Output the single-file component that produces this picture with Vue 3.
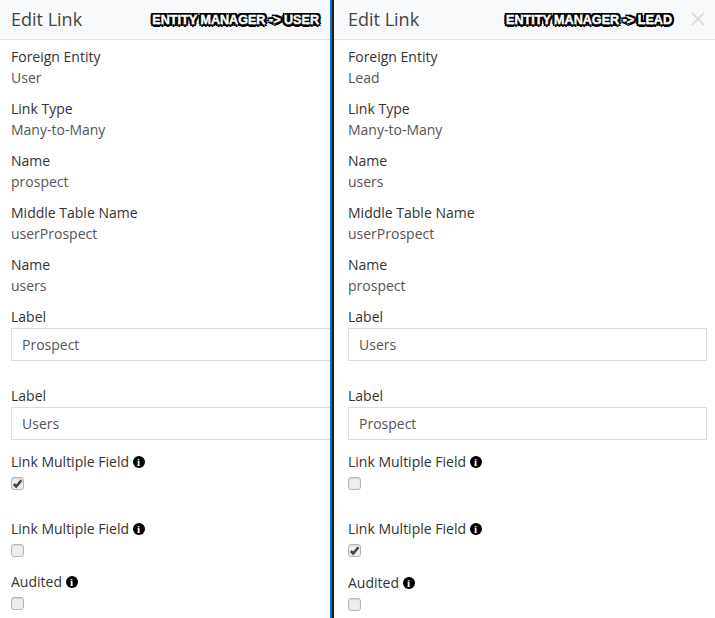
<script setup>
const panes = [
  {
    stamp: 'ENTITY MANAGER -> USER',
    close: false,
    info: [['Foreign Entity', 'User'], ['Link Type', 'Many-to-Many'], ['Name', 'prospect'], ['Middle Table Name', 'userProspect'], ['Name', 'users']],
    labels: ['Prospect', 'Users'],
    checks: [true, false],
    audited: 'audited-a'
  },
  {
    stamp: 'ENTITY MANAGER -> LEAD',
    close: true,
    info: [['Foreign Entity', 'Lead'], ['Link Type', 'Many-to-Many'], ['Name', 'users'], ['Middle Table Name', 'userProspect'], ['Name', 'prospect']],
    labels: ['Users', 'Prospect'],
    checks: [false, true],
    audited: 'audited-b'
  }
]
</script>

<template>
  <div class="page">
    <section v-for="(p, i) in panes" :key="i" class="pane" :class="'pane-' + i">
      <header class="head">
        <h2 class="title">Edit Link</h2>
        <span class="stamp">{{ p.stamp }}</span>
        <svg v-if="p.close" class="close" width="14" height="14" viewBox="0 0 14 14">
          <path d="M1 1 13 13M13 1 1 13" stroke="#dcdcdc" stroke-width="1.8" fill="none" />
        </svg>
      </header>
      <div class="body">
        <div v-for="(r, j) in p.info" :key="j" class="field">
          <div class="lbl">{{ r[0] }}</div>
          <div class="val">{{ r[1] }}</div>
        </div>
        <div class="field input-field first-input">
          <div class="lbl">Label</div>
          <div class="input">{{ p.labels[0] }}</div>
        </div>
        <div class="field input-field second-input">
          <div class="lbl">Label</div>
          <div class="input">{{ p.labels[1] }}</div>
        </div>
        <div class="field check-field lm1">
          <div class="lbl">Link Multiple Field <span class="info">i</span></div>
          <div class="box">
            <svg v-if="p.checks[0]" width="11" height="11" viewBox="0 0 11 11"><path d="M1.8 6 4.2 8.6 9.4 2.2" stroke="#444" stroke-width="2.6" fill="none" /></svg>
          </div>
        </div>
        <div class="field check-field lm2">
          <div class="lbl">Link Multiple Field <span class="info">i</span></div>
          <div class="box">
            <svg v-if="p.checks[1]" width="11" height="11" viewBox="0 0 11 11"><path d="M1.8 6 4.2 8.6 9.4 2.2" stroke="#444" stroke-width="2.6" fill="none" /></svg>
          </div>
        </div>
        <div class="field check-field aud" :class="p.audited">
          <div class="lbl">Audited <span class="info">i</span></div>
          <div class="box"></div>
        </div>
      </div>
    </section>
  </div>
</template>

<style>
html, body { margin: 0; background: #fff; }
</style>

<style scoped>
.page {
  width: 715px;
  height: 618px;
  display: flex;
  overflow: hidden;
  font-family: "Open Sans", sans-serif;
  font-size: 14px;
  line-height: 20px;
  color: #333;
  background: #fff;
}
.pane { height: 618px; overflow: hidden; flex: none; box-sizing: border-box; }
.pane-0 { width: 330px; }
.pane-1 {
  width: 385px;
  border-left: 2px solid #0a6fc2;
  position: relative;
}
.pane-1::before {
  content: "";
  position: absolute;
  top: 0;
  bottom: 0;
  left: 0;
  width: 2px;
  background: #1f1f1f;
}
.head {
  height: 39px;
  box-sizing: content-box;
  background: #f8f9fb;
  border-bottom: 1px solid #e3e3e3;
  display: flex;
  align-items: center;
  padding: 0 11px 0 11px;
}
.pane-1 .head { padding-left: 16px; padding-right: 10px; }
.title {
  margin: 0 0 2px;
  font-size: 18px;
  font-weight: 400;
  color: #444;
  flex: 1;
}
.stamp {
  font-family: "Liberation Sans", sans-serif;
  font-size: 12.6px;
  font-weight: 700;
  color: #fff;
  white-space: nowrap;
  -webkit-text-stroke: 0.4px #fff;
  text-shadow: -2.5px 0 0.6px #000, 2.5px 0 0.6px #000, 0 -2.5px 0.6px #000, 0 2.5px 0.6px #000, -2px -2px 0.6px #000, 2px 2px 0.6px #000, -2px 2px 0.6px #000, 2px -2px 0.6px #000;
}
.pane-1 .stamp { margin-right: 2px; }
.close { margin: 0 0 2px 17px; }
.body { padding: 7px 0 0 11px; }
.pane-1 .body { padding-left: 16px; padding-right: 8px; }
.field { margin-bottom: 11px; }
.lbl { color: #333; }
.val { color: #555; margin-top: 1px; }
.input-field { margin-bottom: 0; }
.input {
  margin-top: 1px;
  height: 33px;
  box-sizing: border-box;
  border: 1px solid #ddd;
  padding: 0 10px;
  line-height: 31px;
  color: #555;
}
.first-input { margin-bottom: 25px; }
.second-input { margin-bottom: 12px; }
.pane-0 .input { border-right: 0; }
.box {
  width: 11px;
  height: 11px;
  margin: 5px 0 0 0;
  border: 1px solid #b5b5b5;
  border-radius: 3px;
  background: #eeeeee;
  box-shadow: inset 0 1px 1px #d8d8d8;
  display: flex;
  align-items: center;
  justify-content: center;
  overflow: hidden;
}
.info {
  display: inline-block;
  width: 12px;
  height: 12px;
  border-radius: 50%;
  background: #000;
  color: #fff;
  font-family: "Liberation Serif", serif;
  font-weight: 700;
  font-size: 11px;
  line-height: 12px;
  text-align: center;
  vertical-align: 1px;
}
.lm1 { margin-bottom: 29px; }
.lm2 { margin-bottom: 15px; }
.audited-b { margin-top: 16px; }
</style>
